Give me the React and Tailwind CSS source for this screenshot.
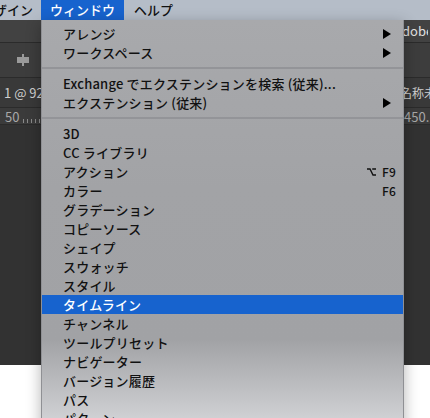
import React from "react";

const items = [
  { t: "アレンジ", arrow: true },
  { t: "ワークスペース", arrow: true },
  { sep: true },
  { t: "Exchange でエクステンションを検索 (従来)..." },
  { t: "エクステンション (従来)", arrow: true },
  { sep: true },
  { t: "3D" },
  { t: "CC ライブラリ" },
  { t: "アクション", sc: "F9", opt: true },
  { t: "カラー", sc: "F6" },
  { t: "グラデーション" },
  { t: "コピーソース" },
  { t: "シェイプ" },
  { t: "スウォッチ" },
  { t: "スタイル" },
  { t: "タイムライン", active: true },
  { t: "チャンネル" },
  { t: "ツールプリセット" },
  { t: "ナビゲーター" },
  { t: "バージョン履歴" },
  { t: "パス" },
  { t: "パターン" },
];

const font = { fontFamily: '"Noto Sans CJK JP", "Noto Sans", sans-serif' };

function Arrow() {
  return (
    <svg width="8" height="10" viewBox="0 0 8 10" className="shrink-0">
      <path d="M0 0 L8 5 L0 10 Z" fill="#000" />
    </svg>
  );
}

function OptKey() {
  return (
    <svg width="9" height="8" viewBox="0 0 9 8" className="shrink-0">
      <path d="M0 1 H3 L6 7 H9 M5.2 1 H9" stroke="#111" strokeWidth="1.4" fill="none" />
    </svg>
  );
}

function Menu() {
  return (
    <div
      className="absolute left-[41px] top-[20px] w-[363px] h-[420px] pt-[4px] border-x border-[#8f9094] shadow-[0_4px_14px_rgba(0,0,0,0.3)] bg-[linear-gradient(180deg,#a8a9ac_0%,#a2a3a6_40%,#a1a2a5_76%,#dcdde0_100%)]"
    >
      {items.map((it, i) =>
        it.sep ? (
          <div key={i} className="h-[12px] flex items-center">
            <div className="w-full h-[2px] bg-[#939498]" />
          </div>
        ) : (
          <div
            key={i}
            className={
              "h-[19px] flex items-center pl-[21px] text-[13px] leading-none font-medium tracking-[0.2px] " +
              (it.active ? "bg-[#1763ce] text-white" : "text-[#111]")
            }
          >
            <span className="flex-1 whitespace-nowrap">{it.t}</span>
            {it.arrow && (
              <span className="pr-[12px] flex items-center">
                <Arrow />
              </span>
            )}
            {it.sc && (
              <span className="pr-[7px] flex items-center gap-[6px] text-[12px] font-medium">
                {it.opt && <OptKey />}
                {it.sc}
              </span>
            )}
          </div>
        )
      )}
    </div>
  );
}

function AlignIcon() {
  return (
    <svg width="14" height="12" viewBox="0 0 14 12">
      <rect x="6" y="0" width="2" height="12" fill="#9a9a9a" />
      <rect x="1" y="3" width="5" height="6" fill="#9a9a9a" />
      <rect x="8" y="3" width="5" height="6" fill="#9a9a9a" />
    </svg>
  );
}

function Ticks() {
  return (
    <div className="flex items-end gap-[3px] h-[6px]">
      {[0, 1, 2, 3, 4].map((i) => (
        <div key={i} className="w-px h-[4px] bg-[#8a8a8a]" />
      ))}
    </div>
  );
}

export default function App() {
  return (
    <div className="relative w-[430px] h-[418px] overflow-hidden bg-white" style={font}>
      {/* menubar */}
      <div className="h-[20px] flex items-stretch bg-[#b5bdc8] text-[13px] text-[#111] font-medium">
        <div className="w-[41px] flex items-center justify-end pr-[8px] whitespace-nowrap overflow-hidden">
          <span className="whitespace-nowrap">デザイン</span>
        </div>
        <div className="w-[83px] flex items-center justify-center bg-[#1763ce] text-white">ウィンドウ</div>
        <div className="flex items-center pl-[10px]">ヘルプ</div>
      </div>

      {/* app area */}
      <div className="h-[345px] flex flex-col bg-[#323232] text-[#d0d0d0]">
        <div className="h-[23px] bg-[#424242] border-b border-[#2b2b2b] flex items-center justify-end pr-[2px] text-[13px] text-[#e0e0e0]">
          <span className="w-[26px] overflow-hidden whitespace-nowrap">dobe</span>
        </div>
        <div className="h-[35px] bg-[#3d3d3d] border-b border-[#2b2b2b] flex items-center pl-[16px]">
          <AlignIcon />
        </div>
        <div className="h-[30px] bg-[#393939] border-b border-[#2b2b2b] flex items-center justify-between text-[13px] text-[#cfcfcf]">
          <span className="pl-[4px] whitespace-nowrap">1 @ 92</span>
          <span className="w-[30px] overflow-hidden whitespace-nowrap text-[12px]">名称未設定</span>
        </div>
        <div className="h-[17px] bg-[#3b3b3b] border-b border-[#2b2b2b] flex items-center justify-between text-[13px] text-[#a8a8a8]">
          <div className="flex items-end gap-[4px] pl-[5px]">
            <span className="leading-none">50</span>
            <Ticks />
          </div>
          <span className="w-[26px] overflow-hidden whitespace-nowrap leading-none">450.</span>
        </div>
        <div className="flex-1" />
      </div>

      <Menu />
    </div>
  );
}
